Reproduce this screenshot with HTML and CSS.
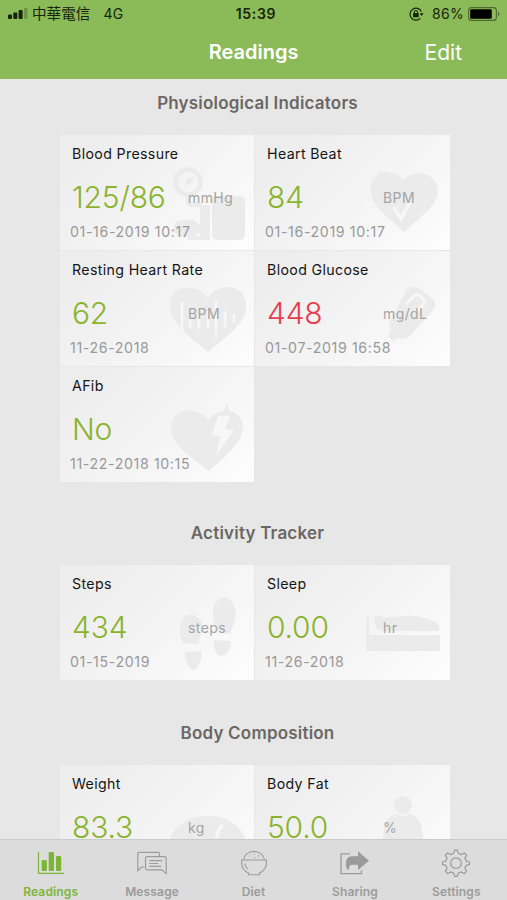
FILE: index.html
```html
<!DOCTYPE html>
<html lang="en">

<head>
    <meta charset="UTF-8">
    <meta name="viewport" content="width=device-width, initial-scale=1.0">
    <title>Readings</title>
    <link rel="stylesheet" href="styles.css">
</head>
<body>
    <header>
        <div class="status-bar">
            <div class="status-left">
                <svg class="signal" width="20" height="12" viewBox="0 0 20 12">
                    <rect x="0" y="6.5" width="4" height="4.5" rx="1"/>
                    <rect x="5.3" y="4.5" width="4" height="6.5" rx="1"/>
                    <rect x="10.6" y="2" width="4" height="9" rx="1"/>
                    <rect x="16" y="0" width="3.5" height="11" rx="1" opacity="0.25"/>
                </svg>
                <span class="carrier">中華電信</span>
                <span class="network">4G</span>
            </div>
            <div class="clock">15:39</div>
            <div class="status-right">
                <svg width="15" height="14" viewBox="0 0 15 14">
                    <path d="M12.4 4.5A6 6 0 1 0 11.4 11.3" fill="none" stroke="#16240a" stroke-width="1.2"/>
                    <path d="M10.6 6.2h4l-2 2.9z"/>
                    <rect x="4.1" y="6" width="5.6" height="4.2" rx="0.5"/>
                    <path d="M5.3 6.3V5a1.6 1.6 0 0 1 3.2 0v1.3" fill="none" stroke="#16240a"/>
                </svg>
                <span class="percent">86%</span>
                <svg class="battery" width="33" height="14" viewBox="0 0 33 14">
                    <rect x="0.6" y="0.6" width="27.8" height="12.8" rx="3" fill="none" stroke="#4e6a30" stroke-width="1.1"/>
                    <rect x="2.2" y="2.2" width="21.6" height="9.6" rx="1.3" fill="#000"/>
                    <path d="M30 4.8q3 2.2 0 4.4z" fill="#4e6a30"/>
                </svg>
            </div>
        </div>
        <div class="nav-bar">
            <h1>Readings</h1>
            <a class="edit">Edit</a>
        </div>
    </header>

    <main>
        <section>
            <h2>Physiological Indicators</h2>
            <div class="cards">
                <div class="card">
                    <svg class="watermark" viewBox="0 0 194 115">
                        <circle cx="128" cy="47" r="12.5" fill="none" stroke="#ebebeb" stroke-width="4.5"/>
                        <path d="M124 51l3-7 7-3-3 7z"/>
                        <path d="M128 61v5q0 4 4 4h10" fill="none" stroke="#ebebeb" stroke-width="4"/>
                        <path d="M114 93q0-8 10-8h9l7 5v7l-7 5h-9q-10 0-10-9z"/>
                        <path d="M140 70h10v35h-22v-4h12z"/>
                        <rect x="152" y="61" width="33" height="44" rx="5"/>
                    </svg>
                    <h3>Blood Pressure</h3>
                    <div class="reading"><span class="value">125/86</span><span class="unit">mmHg</span></div>
                    <div class="date">01-16-2019 10:17</div>
                </div>
                <div class="card">
                    <svg class="watermark" viewBox="0 0 194 115">
                        <path d="M149 97C138 87 124 76 118 66Q112 48 121 42l3-5q16-2 25 8c7-9 21-8 28-2 8 7 7 18 1 26-6 9-19 19-29 28z"/>
                        <path d="M112 71l6-4M139 72l7 12 9-17" fill="none" stroke="#f7f7f7" stroke-width="3.5"/>
                    </svg>
                    <h3>Heart Beat</h3>
                    <div class="reading"><span class="value">84</span><span class="unit">BPM</span></div>
                    <div class="date">01-16-2019 10:17</div>
                </div>
                <div class="card">
                    <svg class="watermark" viewBox="0 0 194 115">
                        <path d="M148 101C134 89 115 76 111 62c-3-11 1-22 11-25 10-2 20 1 26 10 6-9 17-13 26-10 11 4 14 14 11 25-4 14-23 27-37 39z"/>
                        <path d="M122 51v29M130 66v10M139 64v14M148 60v17M156 50v36M165 60v16M174 63v8" fill="none" stroke="#f7f7f7" stroke-width="2.6"/>
                    </svg>
                    <h3>Resting Heart Rate</h3>
                    <div class="reading"><span class="value">62</span><span class="unit">BPM</span></div>
                    <div class="date">11-26-2018</div>
                </div>
                <div class="card">
                    <svg class="watermark" viewBox="0 0 194 115">
                        <path d="M152 38q8-5 14 1l11 8q6 5 0 13l-22 25q-6 5-12 2l-5 3-5-5 3-6q-4-6 1-13z"/>
                        <path d="M151 53l8-8q3-3 6 0l3 3q3 3 0 6l-8 8" fill="none" stroke="#f7f7f7" stroke-width="3"/>
                    </svg>
                    <h3>Blood Glucose</h3>
                    <div class="reading"><span class="value high">448</span><span class="unit">mg/dL</span></div>
                    <div class="date">01-07-2019 16:58</div>
                </div>
                <div class="card">
                    <svg class="watermark" viewBox="0 0 194 115">
                        <path d="M149 104C138 95 116 82 112 67c-3-12 2-21 12-23 10-1 18 2 24 9 4-5 9-8 15-8l4-8 2 7c8 1 14 7 14 16 0 17-21 32-34 44z"/>
                        <path d="M158 49l-6 19 8 1-4 20 18-26-9-1 5-13z" fill="#f7f7f7"/>
                    </svg>
                    <h3>AFib</h3>
                    <div class="reading"><span class="value">No</span></div>
                    <div class="date">11-22-2018 10:15</div>
                </div>
            </div>
        </section>

        <section>
            <h2>Activity Tracker</h2>
            <div class="cards">
                <div class="card">
                    <svg class="watermark" viewBox="0 0 194 115">
                        <path d="M121 57c2-6 8-9 14-6 8 3 9 12 6 18-2 4-1 7-2 10l-16-1c-4-7-4-14-2-21z"/>
                        <path d="M125 87l16-1c1 8-2 16-7 19-6 0-9-10-9-18z"/>
                        <path d="M155 39c3-7 11-9 16-3 6 8 6 17 2 24l-3 9-13-3c-4-9-6-18-2-27z"/>
                        <path d="M154 75l17 1c0 8-3 13-9 15-7 0-9-9-8-16z"/>
                    </svg>
                    <h3>Steps</h3>
                    <div class="reading"><span class="value">434</span><span class="unit">steps</span></div>
                    <div class="date">01-15-2019</div>
                </div>
                <div class="card">
                    <svg class="watermark" viewBox="0 0 194 115">
                        <path d="M111 51h3v19h71v16h-74z"/>
                        <path d="M119 51h7q3 3 9 1l16-1c12-1 21 3 30 6q5 4 3 9h-58q-7-2-7-15z"/>
                    </svg>
                    <h3>Sleep</h3>
                    <div class="reading"><span class="value">0.00</span><span class="unit">hr</span></div>
                    <div class="date">11-26-2018</div>
                </div>
            </div>
        </section>

        <section>
            <h2>Body Composition</h2>
            <div class="cards">
                <div class="card">
                    <svg class="watermark" viewBox="0 0 194 115">
                        <path d="M110 73c6-14 20-22 38-22s31 8 37 22l-8 14h-59z"/>
                        <path d="M157 73q0-8 6-13" fill="none" stroke="#f7f7f7" stroke-width="4"/>
                    </svg>
                    <h3>Weight</h3>
                    <div class="reading"><span class="value">83.3</span><span class="unit">kg</span></div>
                </div>
                <div class="card">
                    <svg class="watermark" viewBox="0 0 194 115">
                        <circle cx="148" cy="40" r="9"/>
                        <path d="M128 80c0-18 2-29 14-31q6 4 12 0c12 2 14 13 14 31z"/>
                    </svg>
                    <h3>Body Fat</h3>
                    <div class="reading"><span class="value">50.0</span><span class="unit">%</span></div>
                </div>
            </div>
        </section>
    </main>

    <nav class="tab-bar">
        <a class="tab active">
            <svg width="30" height="28" viewBox="0 0 30 28">
                <path d="M2.5 3v21.3h25.5" fill="none" stroke="currentColor" stroke-width="1.2"/>
                <g fill="currentColor">
                    <rect x="5.7" y="11" width="5.2" height="11" rx="1.2"/>
                    <rect x="12.7" y="3" width="5.3" height="19" rx="1.2"/>
                    <rect x="20" y="7" width="5.2" height="15" rx="1.2"/>
                </g>
            </svg>
            <span>Readings</span>
        </a>
        <a class="tab">
            <svg width="30" height="28" viewBox="0 0 30 28" fill="none" stroke="currentColor" stroke-width="1.15">
                <path d="M7.2 18H4.6L0.8 21.6V5q0-1.6 1.6-1.6h18.5q1.6 0 1.6 1.6v2.5"/>
                <path d="M10.3 7.6h17q1.9 0 1.9 1.8v15.2l-4.3-3.7H10.3q-1.8 0-1.8-1.8v-9.7q0-1.8 1.8-1.8zM12.3 11.6h13M12.3 14.5h9M12.3 17.3h12"/>
            </svg>
            <span>Message</span>
        </a>
        <a class="tab">
            <svg width="30" height="28" viewBox="0 0 30 28" fill="none" stroke="currentColor" stroke-width="1.15">
                <path d="M4.5 11C5.5 5.8 9.5 2.3 15 2.3S24.5 5.8 25.5 11"/>
                <path d="M2.8 11h24.4c1 6.5-2.2 11-6.7 13v1.7h-11V24C5 22 1.8 17.5 2.8 11zM5.7 14.5q.6 3.8 3.3 5.5"/>
                <path d="M10.5 7h1M14.5 5.2h1M15.5 8.5h1M19 6.8h1"/>
            </svg>
            <span>Diet</span>
        </a>
        <a class="tab">
            <svg width="30" height="28" viewBox="0 0 30 28">
                <path d="M10 4.8H1v19.9h20.5v-3.5" fill="none" stroke="currentColor" stroke-width="1.3"/>
                <path d="M18 2.3l11 9.4-11 9.3v-5.2h-6q-3 0-3 4.7H7q-2-5-.7-9.2Q7.7 7.3 12 7.3h6z" fill="currentColor"/>
            </svg>
            <span>Sharing</span>
        </a>
        <a class="tab">
            <svg width="30" height="28" viewBox="0 0 30 28" fill="none" stroke="currentColor" stroke-width="1.2" stroke-linejoin="round">
                <path d="M12.8 4.3L13.6 1.2h2.8l.8 3.1 3.2 1.3 2.8-1.7 2.4 2.3-1.7 2.9 1.3 3.1 3.3.8v2.4l-3.3.9-1.3 3.1 1.7 2.9-2.4 2.3-2.8-1.7-3.2 1.3-.8 3.1h-2.8l-.8-3.1-3.2-1.3-2.8 1.7-2.4-2.3 1.7-2.9-1.3-3.1-3.3-.9V13l3.3-.8 1.3-3.1-1.7-2.9 2.4-2.3 2.8 1.7z"/>
                <circle cx="15" cy="14.2" r="5.3"/>
            </svg>
            <span>Settings</span>
        </a>
    </nav>
</body>
</html>
```
FILE: styles.css
```css
* {
    box-sizing: border-box;
}

body {
    font-family: Inter, "Noto Sans CJK TC", sans-serif;
    margin: 0;
    height: 900px;
    display: flex;
    flex-direction: column;
    overflow: hidden;
    background-color: #e7e7e7;
}

h1, h2, h3 {
    margin: 0;
}

header {
    flex: none;
    height: 79px;
    background-color: #8bbb58;
}

.status-bar {
    display: grid;
    grid-template-columns: 1fr auto 1fr;
    align-items: center;
    height: 27px;
    padding: 0 6px 0 8px;
    color: #16240a;
    fill: #16240a;
    font-size: 14px;
}

.status-left, .status-right {
    display: flex;
    align-items: center;
}

.status-right {
    justify-content: flex-end;
}

.carrier {
    margin-left: 4px;
    font-size: 14.6px;
    line-height: 20px;
}

.network {
    margin-left: 13px;
    letter-spacing: 0.3px;
}

.clock {
    padding-left: 3px;
    font-weight: 600;
    letter-spacing: 0.7px;
}

.percent {
    margin: 0 4px 0 8px;
    letter-spacing: 0.3px;
}

.nav-bar {
    display: grid;
    grid-template-columns: 1fr auto 1fr;
    align-items: center;
    height: 50px;
    color: white;
}

.nav-bar h1 {
    grid-column: 2;
    font-size: 20px;
    font-weight: 600;
}

.edit {
    justify-self: end;
    margin-right: 45px;
    font-size: 21px;
}

main {
    flex: 1;
    min-height: 0;
    overflow: hidden;
    padding-top: 14px;
}

section {
    margin-bottom: 41px;
}

section + section {
    margin-bottom: 43px;
}

h2 {
    margin-bottom: 22px;
    padding-left: 8px;
    color: #6b6765;
    font-size: 17px;
    font-weight: 600;
    letter-spacing: 0.2px;
    line-height: 20px;
    text-align: center;
}

.cards {
    display: grid;
    grid-template-columns: 194px 195px;
    gap: 1px;
    width: 390px;
    margin-left: 60px;
}

.card {
    position: relative;
    height: 115px;
    padding: 9px 0 0 12px;
    background: linear-gradient(135deg, #ededed 10%, #f4f4f4 55%, #fcfcfc 95%);
}

.watermark {
    position: absolute;
    top: 0;
    left: 0;
    width: 194px;
    height: 115px;
    fill: #ebebeb;
}

.card h3, .reading, .date {
    position: relative;
}

.card h3 {
    color: #151515;
    font-size: 14.2px;
    font-weight: 400;
    letter-spacing: 0.35px;
    line-height: 20px;
}

.reading {
    display: flex;
    align-items: center;
    height: 36px;
    margin-top: 15px;
}

.value {
    width: 116px;
    color: #8ab32e;
    font-size: 30px;
    font-weight: 300;
    letter-spacing: -0.2px;
}

.value.high {
    color: #e53e4c;
}

.unit {
    color: #a4a4a4;
    font-size: 14px;
    letter-spacing: 0.4px;
}

.date {
    margin: 7px 0 0 -2px;
    color: #999;
    font-size: 14.2px;
    letter-spacing: 0.62px;
    line-height: 20px;
}

.tab-bar {
    display: flex;
    flex: none;
    height: 61px;
    border-top: 1px solid #cbcbcb;
    background-color: #dcdcdc;
}

.tab {
    display: flex;
    flex: 1;
    flex-direction: column;
    align-items: center;
    padding-top: 9px;
    color: #9b9b9b;
    font-size: 12px;
    font-weight: 600;
    letter-spacing: 0.15px;
    line-height: 16px;
}

.tab span {
    margin-top: 7px;
}

.tab.active {
    color: #7cb537;
}
```
